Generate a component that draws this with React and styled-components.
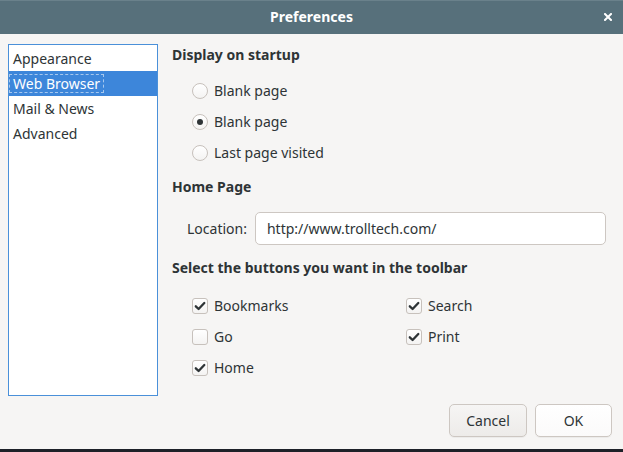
import React from "react";
import styled, { createGlobalStyle } from "styled-components";

const Global = createGlobalStyle`
  html, body { margin: 0; padding: 0; }
  body { font-family: "Noto Sans", "DejaVu Sans", sans-serif; color: #2e3436; }
  * { box-sizing: border-box; }
`;

const Window = styled.div`
  width: 623px;
  height: 452px;
  display: flex;
  flex-direction: column;
  background: #f6f5f4;
  overflow: hidden;
`;

const TitleBar = styled.div`
  height: 34px;
  flex: none;
  background: #57707b;
  border-top: 1px solid #6a818b;
  display: grid;
  grid-template-columns: 1fr auto 1fr;
  align-items: center;
`;

const Title = styled.div`
  grid-column: 2;
  color: #ffffff;
  font-weight: 700;
  font-size: 14px;
  line-height: 20px;
  margin-top: -1px;
`;

const Close = styled.div`
  grid-column: 3;
  justify-self: end;
  margin-right: 11px;
  width: 8px;
  height: 8px;
  display: flex;
  margin-top: -1px;
`;

const Body = styled.div`
  flex: 1;
  display: grid;
  grid-template-columns: 150px 1fr;
  grid-template-rows: 1fr auto;
  column-gap: 14px;
  row-gap: 8px;
  padding: 10px 11px 12px 8px;
  font-size: 14px;
`;

const List = styled.div`
  background: #ffffff;
  border: 1px solid #4a90d9;
  padding-top: 1px;
`;

const Item = styled.div`
  height: 25px;
  display: flex;
  align-items: center;
  padding-left: 0;
  background: ${(p) => (p.$selected ? "#3d86da" : "transparent")};
  color: ${(p) => (p.$selected ? "#ffffff" : "#2e3436")};
`;

const ItemText = styled.span`
  display: inline-block;
  line-height: 17px;
  padding: 0 3px;
  border: 1px dashed ${(p) => (p.$focus ? "rgba(255,255,255,0.55)" : "transparent")};
`;

const Panel = styled.div`
  display: flex;
  flex-direction: column;
  padding-top: 1px;
`;

const Heading = styled.div`
  font-weight: 700;
  line-height: 20px;
  margin-top: ${(p) => p.$mt || 0}px;
`;

const Options = styled.div`
  display: flex;
  flex-direction: column;
  padding-left: 20px;
  margin-top: ${(p) => p.$mt || 0}px;
`;

const OptionRow = styled.label`
  height: 31px;
  display: flex;
  align-items: center;
  gap: 6px;
`;

const Radio = styled.span`
  width: 16px;
  height: 16px;
  border-radius: 50%;
  border: 1px solid #c7c1bc;
  background: linear-gradient(#ffffff, #f4f3f2);
  display: flex;
  align-items: center;
  justify-content: center;
  flex: none;
  &::after {
    content: "";
    width: 6px;
    height: 6px;
    border-radius: 50%;
    background: ${(p) => (p.$checked ? "#2e3436" : "transparent")};
  }
`;

const Box = styled.span`
  width: 16px;
  height: 16px;
  border-radius: 3px;
  border: 1px solid #c7c1bc;
  background: linear-gradient(#ffffff, #f4f3f2);
  display: flex;
  align-items: center;
  justify-content: center;
  flex: none;
`;

const LocationRow = styled.div`
  margin-top: 15px;
  display: flex;
  align-items: center;
  gap: 8px;
  padding-left: 15px;
  margin-right: 6px;
`;

const Input = styled.div`
  flex: 1;
  height: 33px;
  background: #ffffff;
  border: 1px solid #cdc7c2;
  border-radius: 5px;
  display: flex;
  align-items: center;
  padding-left: 11px;
`;

const CheckGrid = styled.div`
  display: grid;
  grid-template-columns: 214px auto;
  padding-left: 20px;
  margin-top: 12px;
`;

const Buttons = styled.div`
  grid-column: 1 / -1;
  justify-self: end;
  display: flex;
  gap: 8px;
`;

const Button = styled.button`
  width: ${(p) => p.$w}px;
  height: 33px;
  font-family: inherit;
  font-size: 14px;
  color: #2e3436;
  border: 1px solid #cdc7c2;
  border-radius: 5px;
  background: ${(p) =>
    p.$primary ? "linear-gradient(#ffffff, #fbfafa)" : "linear-gradient(#f6f5f4, #edebe9)"};
  box-shadow: 0 1px rgba(0, 0, 0, 0.04);
  padding: 0;
`;

const Dock = styled.div`
  height: 3px;
  flex: none;
  background: #1d2128;
`;

const Check = () => (
  <svg width="12" height="12" viewBox="0 0 12 12">
    <path d="M1.8 6.3 L4.6 9 L10.3 3" fill="none" stroke="#2e3436" strokeWidth="2.3" strokeLinecap="round" strokeLinejoin="round" />
  </svg>
);

const CheckOption = ({ label, checked }) => (
  <OptionRow>
    <Box>{checked && <Check />}</Box>
    <span>{label}</span>
  </OptionRow>
);

export default function App() {
  return (
    <>
      <Global />
      <Window>
        <TitleBar>
          <Title>Preferences</Title>
          <Close>
            <svg width="8" height="8" viewBox="0 0 8 8">
              <path d="M1 1 L7 7 M7 1 L1 7" stroke="#ffffff" strokeWidth="2" strokeLinecap="square" />
            </svg>
          </Close>
        </TitleBar>
        <Body>
          <List>
            <Item><ItemText>Appearance</ItemText></Item>
            <Item $selected><ItemText $focus>Web Browser</ItemText></Item>
            <Item><ItemText>Mail &amp; News</ItemText></Item>
            <Item><ItemText>Advanced</ItemText></Item>
          </List>
          <Panel>
            <Heading>Display on startup</Heading>
            <Options $mt={10}>
              <OptionRow><Radio /><span>Blank page</span></OptionRow>
              <OptionRow><Radio $checked /><span>Blank page</span></OptionRow>
              <OptionRow><Radio /><span>Last page visited</span></OptionRow>
            </Options>
            <Heading $mt={9}>Home Page</Heading>
            <LocationRow>
              <span>Location:</span>
              <Input>http://www.trolltech.com/</Input>
            </LocationRow>
            <Heading $mt={13}>Select the buttons you want in the toolbar</Heading>
            <CheckGrid>
              <CheckOption label="Bookmarks" checked />
              <CheckOption label="Search" checked />
              <CheckOption label="Go" />
              <CheckOption label="Print" checked />
              <CheckOption label="Home" checked />
            </CheckGrid>
          </Panel>
          <Buttons>
            <Button $w={78}>Cancel</Button>
            <Button $w={77} $primary>OK</Button>
          </Buttons>
        </Body>
        <Dock />
      </Window>
    </>
  );
}
